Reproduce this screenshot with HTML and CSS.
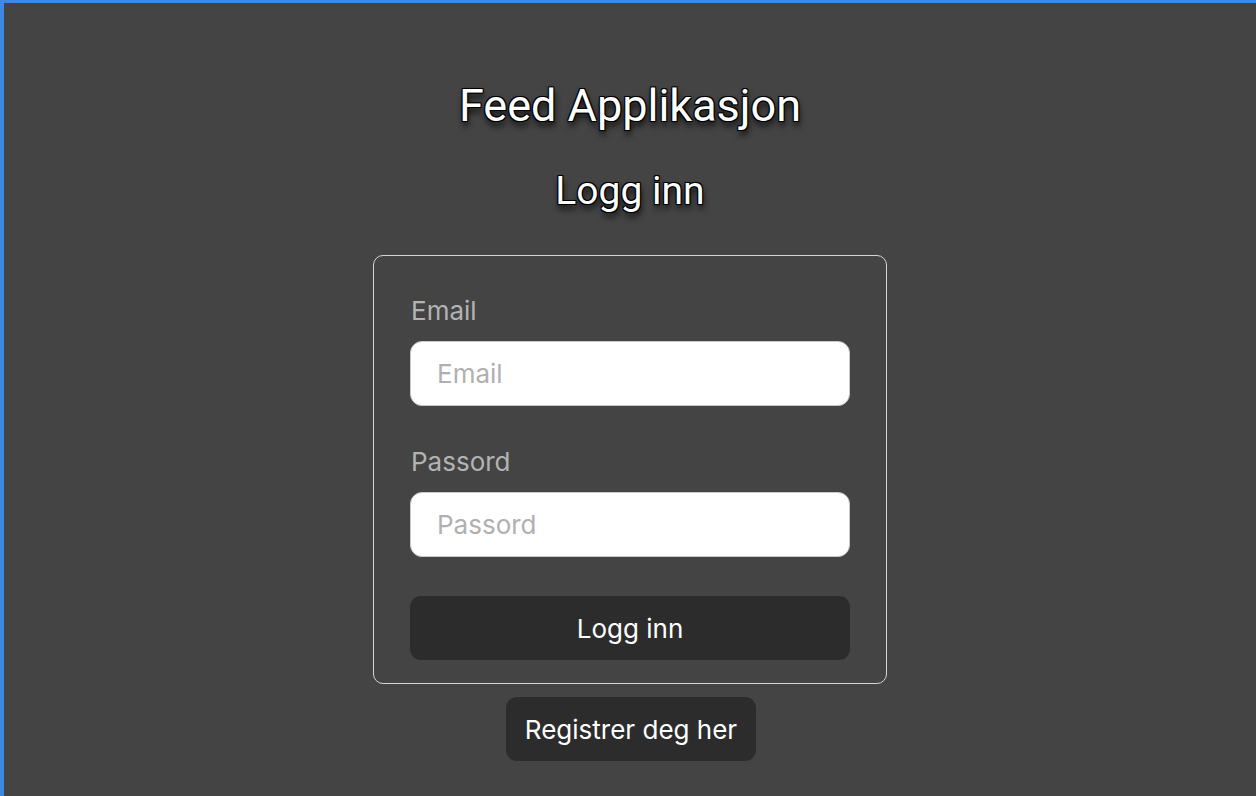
FILE: index.html
```html
<!DOCTYPE html>
<html lang="no">
<head>
<meta charset="utf-8">
<title>Feed Applikasjon</title>
<link rel="stylesheet" href="styles.css">
</head>
<body>
<div class="frame">
  <h1 class="title">Feed Applikasjon</h1>
  <h2 class="subtitle">Logg inn</h2>
  <form class="card">
    <label class="label" for="email">Email</label>
    <input class="input" id="email" type="email" placeholder="Email">
    <label class="label label-gap" for="pw">Passord</label>
    <input class="input" id="pw" type="password" placeholder="Passord">
    <button class="btn btn-full" type="button">Logg inn</button>
  </form>
  <button class="btn btn-register" type="button">Registrer deg her</button>
</div>
</body>
</html>
```

FILE: styles.css
```css
* { box-sizing: border-box; }
html, body { margin: 0; padding: 0; }
body { background: #444444; }
.frame {
  min-height: 796px;
  background: #444444;
  border-top: 3px solid #3d8ae5;
  border-left: 4px solid #3d8ae5;
  display: flex;
  flex-direction: column;
  align-items: center;
  padding-top: 77px;
}
.title, .subtitle {
  font-family: Roboto, "Liberation Sans", sans-serif;
  font-weight: 400;
  color: #ffffff;
  margin: 0;
  text-shadow: -1px -1px 0 #000, 1px -1px 0 #000, -1px 1px 0 #000, 1px 1px 0 #000, 0 0 2px #000, 1px 5px 6px rgba(0,0,0,0.85);
}
.title { font-size: 45px; line-height: 52px; }
.subtitle { font-size: 39px; line-height: 46px; margin-top: 36px; }
.card {
  margin-top: 41px;
  width: 514px;
  border: 1px solid #d4d4d4;
  border-radius: 10px;
  padding: 40px 36px 23px;
  display: flex;
  flex-direction: column;
  font-family: Inter, "Noto Sans", sans-serif;
}
.label {
  color: #b3b3b3;
  font-size: 26px;
  line-height: 30px;
  margin-bottom: 15px;
  padding-left: 1px;
}
.label-gap { margin-top: 41px; }
.input {
  height: 65px;
  border: 1px solid #c8c8c8;
  border-radius: 12px;
  background: #ffffff;
  padding: 0 26px;
  font-family: Inter, "Noto Sans", sans-serif;
  font-size: 26px;
  color: #333;
  outline: none;
}
.input::placeholder { color: #b0b0b0; }
.btn {
  border: none;
  background: #2c2c2c;
  color: #ffffff;
  font-family: Inter, "Noto Sans", sans-serif;
  font-size: 26px;
  border-radius: 11px;
  height: 64px;
  cursor: pointer;
}
.btn-full { margin-top: 39px; width: 100%; }
.btn-register { margin-top: 13px; padding: 0 19px; margin-left: 2px; }
```
